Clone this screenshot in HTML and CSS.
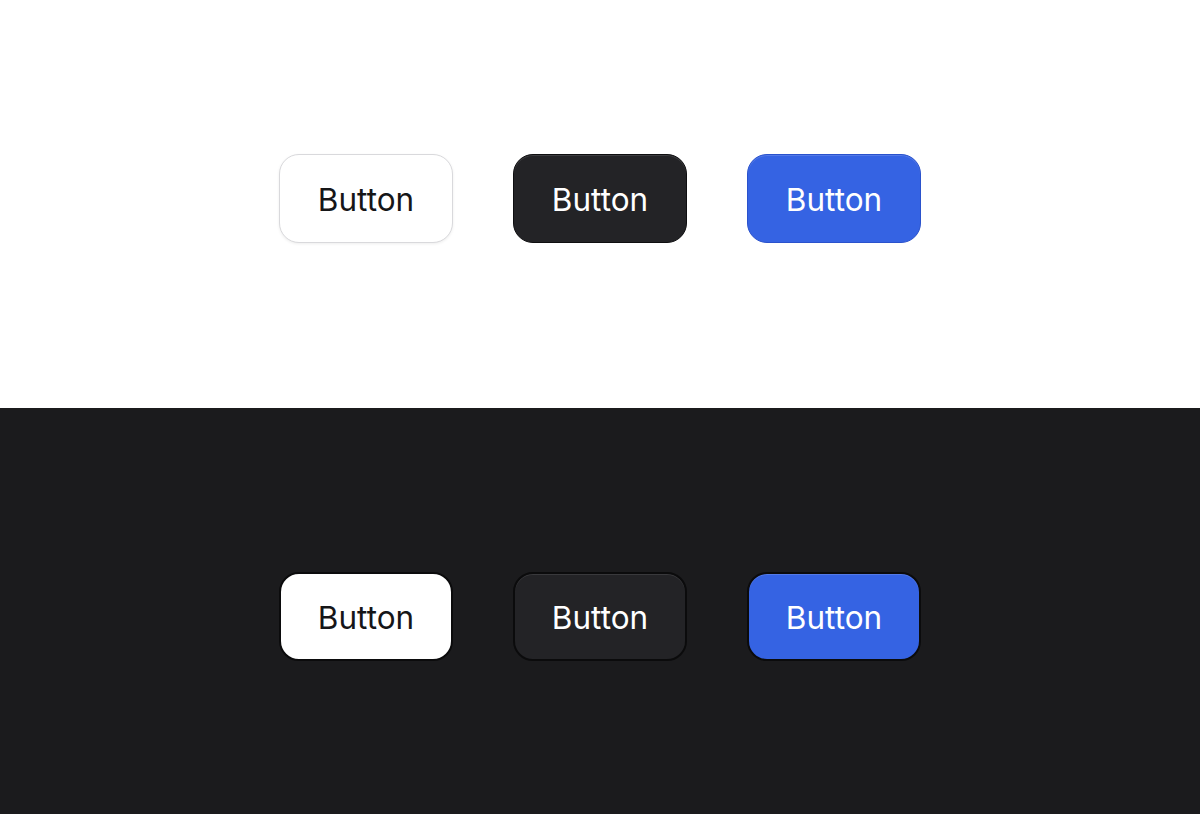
FILE: index.html
```html
<!DOCTYPE html>
<html>
<head>
<meta charset="utf-8">
<link rel="stylesheet" href="styles.css">
</head>
<body>
  <section class="panel panel-light">
    <div class="row">
      <button class="btn btn-white">Button</button>
      <button class="btn btn-black">Button</button>
      <button class="btn btn-blue">Button</button>
    </div>
  </section>
  <section class="panel panel-dark">
    <div class="row">
      <button class="btn btn-white">Button</button>
      <button class="btn btn-black">Button</button>
      <button class="btn btn-blue">Button</button>
    </div>
  </section>
</body>
</html>
```

FILE: styles.css
```css
* { box-sizing: border-box; }
html, body { margin: 0; padding: 0; }
body {
  width: 1200px;
  height: 814px;
  font-family: Inter, "Noto Sans", sans-serif;
}
.panel {
  display: flex;
  align-items: center;
  justify-content: center;
}
.panel-light {
  height: 408px;
  background: #ffffff;
  padding-bottom: 12px;
}
.panel-dark {
  height: 406px;
  background: #1b1b1d;
  padding-top: 10px;
}
.row {
  display: flex;
  gap: 60px;
}
.btn {
  width: 174px;
  height: 89px;
  border-radius: 20px;
  font-family: Inter, "Noto Sans", sans-serif;
  font-size: 31.5px;
  font-weight: 400;
  letter-spacing: 0;
  display: flex;
  align-items: center;
  justify-content: center;
  padding: 2px 0 0 0;
  cursor: pointer;
}
.btn-white {
  background: #ffffff;
  color: #161618;
  border: 1.5px solid #d9d9dc;
  box-shadow: 0 1px 3px rgba(0,0,0,0.07);
}
.btn-black {
  background: #232326;
  color: #ffffff;
  border: 1.5px solid #0e0e10;
  box-shadow: inset 0 1px 0 rgba(255,255,255,0.12);
}
.btn-blue {
  background: #3563e3;
  color: #ffffff;
  border: 1.5px solid #2a52cc;
  box-shadow: inset 0 1px 0 rgba(255,255,255,0.15);
}
.panel-dark .btn-white {
  border: 2px solid #0b0b0c;
  box-shadow: none;
}
.panel-dark .btn-black {
  border: 2px solid #0b0b0c;
  box-shadow: inset 0 1px 0 rgba(255,255,255,0.1);
}
.panel-dark .btn-blue {
  border: 2px solid #0b0b0c;
  box-shadow: inset 0 1px 0 rgba(255,255,255,0.15);
}
```
